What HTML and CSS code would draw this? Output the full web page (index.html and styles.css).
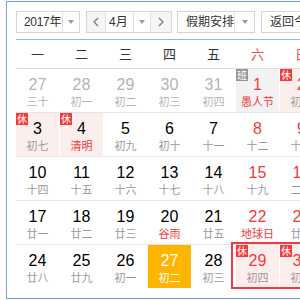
FILE: index.html
```html
<!DOCTYPE html>
<html lang="zh">
<head>
<meta charset="utf-8">
<link rel="stylesheet" href="styles.css">
</head>
<body>
<div class="cal">
  <div class="head">
    <div class="sel year"><span class="txt">2017年</span><span class="arr"><i class="tri"></i></span></div>
    <div class="sel month">
      <span class="nav"><svg width="8" height="10" viewBox="0 0 8 10"><polyline points="6,1 2,5 6,9" fill="none" stroke="#777" stroke-width="1.2"/></svg></span>
      <span class="txt">4月</span><span class="arr"><i class="tri"></i></span>
      <span class="nav next"><svg width="8" height="10" viewBox="0 0 8 10"><polyline points="2,1 6,5 2,9" fill="none" stroke="#777" stroke-width="1.2"/></svg></span>
    </div>
    <div class="sel hol"><span class="txt">假期安排</span><span class="arr"><i class="tri"></i></span></div>
    <div class="sel today"><span class="txt">返回今天</span></div>
  </div>
  <div class="week">
    <span>一</span><span>二</span><span>三</span><span>四</span><span>五</span><span class="we">六</span><span class="we">日</span>
  </div>
  <div class="row">
    <div class="cell other"><b>27</b><em>三十</em></div>
    <div class="cell other"><b>28</b><em>初一</em></div>
    <div class="cell other"><b>29</b><em>初二</em></div>
    <div class="cell other"><b>30</b><em>初三</em></div>
    <div class="cell other"><b>31</b><em>初四</em></div>
    <div class="cell work red"><i class="tag ban">班</i><b>1</b><em class="fest">愚人节</em></div>
    <div class="cell rest red"><i class="tag">休</i><b>2</b><em>初六</em></div>
  </div>
  <div class="row">
    <div class="cell rest"><i class="tag">休</i><b>3</b><em>初七</em></div>
    <div class="cell rest"><i class="tag">休</i><b>4</b><em class="fest">清明</em></div>
    <div class="cell"><b>5</b><em>初九</em></div>
    <div class="cell"><b>6</b><em>初十</em></div>
    <div class="cell"><b>7</b><em>十一</em></div>
    <div class="cell red"><b>8</b><em>十二</em></div>
    <div class="cell red"><b>9</b><em>十三</em></div>
  </div>
  <div class="row">
    <div class="cell"><b>10</b><em>十四</em></div>
    <div class="cell"><b>11</b><em>十五</em></div>
    <div class="cell"><b>12</b><em>十六</em></div>
    <div class="cell"><b>13</b><em>十七</em></div>
    <div class="cell"><b>14</b><em>十八</em></div>
    <div class="cell red"><b>15</b><em>十九</em></div>
    <div class="cell red"><b>16</b><em>二十</em></div>
  </div>
  <div class="row">
    <div class="cell"><b>17</b><em>廿一</em></div>
    <div class="cell"><b>18</b><em>廿二</em></div>
    <div class="cell"><b>19</b><em>廿三</em></div>
    <div class="cell"><b>20</b><em class="fest">谷雨</em></div>
    <div class="cell"><b>21</b><em>廿五</em></div>
    <div class="cell red"><b>22</b><em class="fest">地球日</em></div>
    <div class="cell red"><b>23</b><em>廿七</em></div>
  </div>
  <div class="row last">
    <div class="cell"><b>24</b><em>廿八</em></div>
    <div class="cell"><b>25</b><em>廿九</em></div>
    <div class="cell"><b>26</b><em>初一</em></div>
    <div class="cell now"><b>27</b><em>初二</em></div>
    <div class="cell"><b>28</b><em>初三</em></div>
    <div class="cell rest red"><i class="tag">休</i><b>29</b><em>初四</em></div>
    <div class="cell rest red"><i class="tag">休</i><b>30</b><em>初五</em></div>
    <div class="range"></div>
  </div>
</div>
</body>
</html>
```
FILE: styles.css
```css
html, body {
  margin: 0;
  padding: 0;
  overflow: hidden;
  width: 300px;
  height: 300px;
  background: #fff;
}
.cal {
  margin: 1px 0 0 6px;
  width: 420px;
  height: 296px;
  border: 1px solid #6fa6ee;
  border-right: none;
  padding-left: 9px;
  font-family: "Liberation Sans", Arial, "Noto Sans CJK SC", sans-serif;
  color: #333;
  box-sizing: content-box;
}
.head {
  height: 38px;
  box-sizing: border-box;
  padding-top: 9px;
  border-bottom: 1px solid #8ab6f2;
  display: flex;
  align-items: flex-start;
  gap: 6px;
}
.sel {
  height: 20px;
  border: 1px solid #d6d6d6;
  display: flex;
  align-items: stretch;
  font-size: 12px;
  line-height: 20px;
  color: #333;
  background: #fff;
  flex: none;
  white-space: nowrap;
  overflow: hidden;
}
.sel .txt {
  padding-left: 8px;
  flex: 1;
  white-space: nowrap;
  overflow: hidden;
}
.year .txt { padding-left: 7px; letter-spacing: -0.3px; }
.sel .arr {
  width: 16px;
  flex: none;
  border-left: 1px solid #e2e2e2;
  display: flex;
  align-items: center;
  justify-content: center;
}
.tri {
  width: 0;
  height: 0;
  border-left: 3.5px solid transparent;
  border-right: 3.5px solid transparent;
  border-top: 4px solid #9a9a9a;
}
.year { width: 62px; }
.month { width: 84px; margin-right: -1px; }
.month .txt { padding-left: 3px; }
.nav {
  width: 18px;
  flex: none;
  background: #f5f5f5;
  border-right: 1px solid #e2e2e2;
  display: flex;
  align-items: center;
  justify-content: center;
}
.nav.next {
  width: 20px;
  border-right: none;
  border-left: 1px solid #e2e2e2;
}
.hol { width: 76px; }
.hol .arr { width: 19px; }
.today { width: 60px; }

.week {
  height: 28px;
  border-bottom: 1px solid #dedede;
  display: grid;
  grid-template-columns: repeat(7, 43px);
  column-gap: 1px;
  font-family: "Noto Sans CJK SC", sans-serif;
  font-size: 13px;
  line-height: 28px;
  text-align: center;
  color: #333;
}
.week .we { color: #f24b4b; }

.row {
  position: relative;
  height: 43px;
  border-bottom: 1px solid #e5e5e5;
  display: grid;
  grid-template-columns: repeat(7, 43px);
  column-gap: 1px;
}
.row.last { border-bottom: none; }
.cell {
  position: relative;
  text-align: center;
  display: flex;
  flex-direction: column;
  align-items: center;
}
.cell b {
  font-weight: normal;
  font-size: 16px;
  line-height: 18px;
  padding-top: 7px;
  color: #000;
}
.cell em {
  font-style: normal;
  font-family: "Noto Sans CJK SC", sans-serif;
  font-size: 11px;
  line-height: 13px;
  margin-top: 1px;
  color: #9a9a9a;
  white-space: nowrap;
}
.cell.other b { color: #b4b4b4; }
.cell.other em { color: #b4b4b4; }
.cell.red b { color: #f23a3a; }
.cell em.fest { color: #f23a3a; }
.cell.rest { background: #fdeeee; }
.cell.work { background: #f2f2f2; }
.cell.now { background: #ffb400; }
.cell.now b, .cell.now em { color: #fff; }
.tag {
  position: absolute;
  left: 0;
  top: 0;
  width: 12px;
  height: 12px;
  background: #f43a3a;
  color: #fff;
  font-style: normal;
  font-family: "Noto Sans CJK SC", sans-serif;
  font-size: 10px;
  line-height: 12px;
  text-align: center;
}
.tag.ban { background: #969696; }
.range {
  position: absolute;
  left: 215px;
  top: -3px;
  width: 130px;
  height: 47px;
  border: 2px solid #f03c3c;
  box-sizing: border-box;
}
```
